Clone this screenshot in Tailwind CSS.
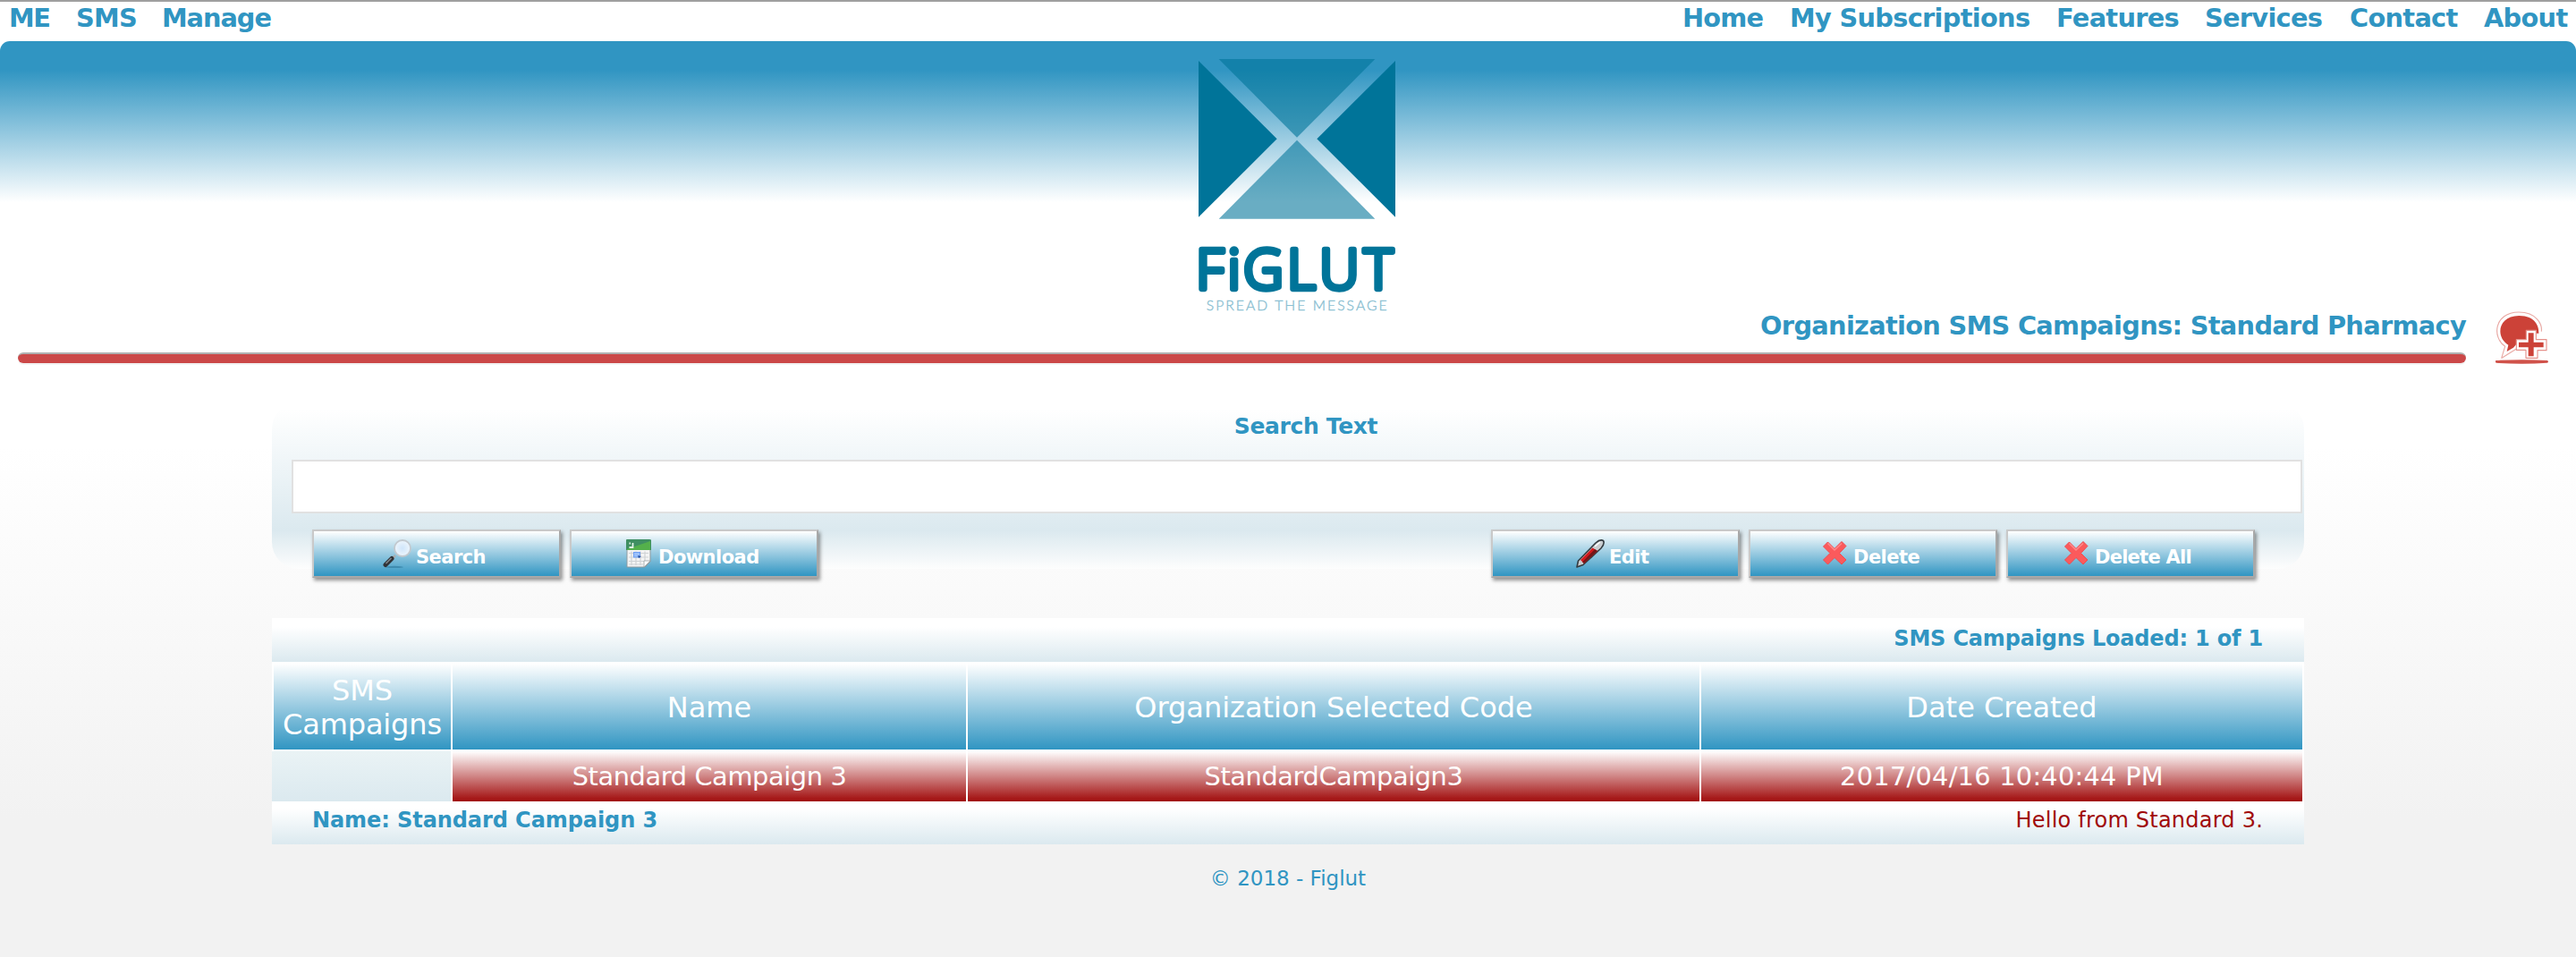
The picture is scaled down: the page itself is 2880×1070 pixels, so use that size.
<!DOCTYPE html>
<html lang="en">
<head>
<meta charset="utf-8">
<title>Figlut</title>
<script src="https://cdn.jsdelivr.net/npm/@tailwindcss/browser@4"></script>
</head>
<body class="w-[2880px] h-[1070px] overflow-hidden border-t-2 border-[#9f9f9f] bg-[linear-gradient(to_bottom,#ffffff_500px,#f2f2f2_915px)] font-['DejaVu_Sans',Verdana,sans-serif] text-[#3095c2]">

<nav class="flex h-[44px] justify-between text-[28.8px] leading-[36px] font-bold whitespace-nowrap">
  <div class="flex pl-[10px]">
    <a class="w-[75px] tracking-[-1.5px]">ME</a>
    <a class="w-[96px] tracking-[-0.7px]">SMS</a>
    <a class="tracking-[-1.05px]">Manage</a>
  </div>
  <div class="flex">
    <a class="w-[120px] tracking-[-0.8px]">Home</a>
    <a class="w-[298px] tracking-[-0.68px]">My Subscriptions</a>
    <a class="w-[166px] tracking-[-0.7px]">Features</a>
    <a class="w-[162px] tracking-[-0.7px]">Services</a>
    <a class="w-[150px] tracking-[-0.7px]">Contact</a>
    <a class="w-[103px] tracking-[-0.7px]">About</a>
  </div>
</nav>

<header class="flex h-[298px] items-start justify-center rounded-t-[11px] bg-[linear-gradient(to_bottom,#3095c2_32px,#ffffff_180px)] pt-[20px] pl-[20px]">
  <svg class="h-[284px] w-[220px] shrink-0 overflow-visible" viewBox="120 78 660 852">
    <path d="M120 84L383 346L120 608Z" fill="#007499"/>
    <path d="M780 84L517 346L780 608Z" fill="#007499"/>
    <path d="M188 78H712L450 341Z" fill="#007499" fill-opacity=".6"/>
    <path d="M450 350L712 614H188Z" fill="#007499" fill-opacity=".59"/>
    <text x="112 218 271 418 526 675" y="848" font-family="Open Sans, sans-serif" font-size="184" font-weight="300" fill="#007499" stroke="#007499" stroke-width="19" stroke-linejoin="round" stroke-linecap="round">FiGLUT</text>
    <text x="146" y="922" font-family="Lato, sans-serif" font-weight="300" font-size="47" fill="#8bbfd2" stroke="#8bbfd2" stroke-width="1.2" textLength="606">SPREAD THE MESSAGE</text>
  </svg>
</header>

<section class="flex pl-[20px]">
  <div class="w-[2737px]">
    <h1 class="text-right text-[28.8px] leading-[40px] font-bold tracking-[-0.68px]">Organization SMS Campaigns: Standard Pharmacy</h1>
    <div class="mt-[10px] h-[12px] rounded-[6px] border-t-2 border-[#b0b0b0] bg-[#cb4848] shadow-[0_2px_0_#f3f3f3]"></div>
  </div>
  <svg class="mt-[4px] ml-[33px] h-[60px] w-[60px]" viewBox="60 54 180 180">
    <path d="M80 212L92 172C48 142 54 58 138 57C200 57 217 100 214 122" fill="none" stroke="#e9aaa5" stroke-width="3.500"/>
    <path d="M81 211L134 178" stroke="#e9aaa5" stroke-width="3.500"/>
    <path d="M98 189L103 167C60 142 66 70 139 69C198 69 206 110 205 128H165V155H138L120 176Z" fill="#cc4238"/>
    <path d="M163 118H196V149H231V185H201V211H162V184H130V149H163Z" fill="#fff" stroke="#e5928c" stroke-width="3.500" stroke-linejoin="round"/>
    <path d="M170 127H188V158H221V175H188V205H170V175H138V158H170Z" fill="#cc4238"/>
    <path d="M62 219Q148 214 234 219Q240 223 234 227Q148 233 62 227Q56 223 62 219Z" fill="#d0524a"/>
  </svg>
</section>

<main class="mx-auto mt-[42px] w-[2272px] whitespace-nowrap">
  <section class="h-[186px] rounded-[30px] bg-[linear-gradient(to_bottom,#ffffff_4%,#dbe9ef_77%,#fdfdfd_100%)]">
    <label class="block pt-[11px] pl-[40px] text-center text-[25px] leading-[32px] font-bold tracking-[-0.35px]">Search Text</label>
    <input class="mt-[21px] ml-[22px] block h-[60px] w-[2248px] border-2 border-[#e1e1e1] bg-white">
    <div class="mt-[18px] flex justify-between pr-[55px] pl-[45px] text-[21px] leading-[26px] font-bold tracking-[-0.55px] text-white">
      <div class="flex gap-[10px]">
        <button class="flex h-[54px] w-[278px] items-center gap-[5px] border-2 border-t-[#c9c9c9] border-r-[#a8a8a8] border-b-[#a8a8a8] border-l-[#c9c9c9] bg-[linear-gradient(to_bottom,#ffffff,#3095c2)] pl-[77px] shadow-[2px_3px_4px_rgba(0,0,0,0.42)]">
          <svg class="h-8 w-8" viewBox="0 0 32 32">
            <defs><radialGradient id="lens"><stop offset="0" stop-color="#cfe5fa"/><stop offset="1" stop-color="#edf5fc"/></radialGradient></defs>
            <ellipse cx="13" cy="31" rx="10" ry="1.2" fill="#1e668a" opacity=".45"/>
            <path d="M14 18L10 22" stroke="#a9adb0" stroke-width="2.5"/>
            <path d="M10 21.500L3 28.500" stroke="#303337" stroke-width="5" stroke-linecap="round"/>
            <path d="M9.500 21L3.500 27" stroke="#85898d" stroke-width="1.500"/>
            <circle cx="22" cy="10" r="9" fill="url(#lens)" stroke="#c2c9cf" stroke-width="1.800"/>
          </svg>
          <span class="mt-[7px]">Search</span>
        </button>
        <button class="flex h-[54px] w-[278px] items-center gap-[5px] border-2 border-t-[#c9c9c9] border-r-[#a8a8a8] border-b-[#a8a8a8] border-l-[#c9c9c9] bg-[linear-gradient(to_bottom,#ffffff,#3095c2)] pl-[59px] shadow-[2px_3px_4px_rgba(0,0,0,0.42)]">
          <svg class="h-8 w-8" viewBox="0 0 32 32">
            <path d="M3 10H29V25L23 31H3Z" fill="#f4f4f4" stroke="#8e9a9e"/>
            <path d="M2 1Q2 0 3 0H28Q30 0 30 1V12H2Z" fill="#3f8f62"/>
            <path d="M3 11L29 2V12H3Z" fill="#54b04b"/>
            <path d="M9.500 4V9H5.500M5.500 4.500H7" fill="none" stroke="#e2f3e5" stroke-width="1.800"/>
            <path d="M5 15.500H27M5 20H27M5 24.500H25M5 28H21M8 13.500V29M13 13.500V29M18 13.500V29M23 13.500V25" stroke="#d0d3d5" stroke-width="1.200"/>
            <rect x="10.500" y="14.500" width="7" height="5.500" fill="#9cc1fb" stroke="#6f9ff2"/>
            <path d="M15 18L19 19L16 21Z" fill="#264f9e"/>
            <path d="M22 31V24H29Z" fill="#fff" stroke="#9ba2a5" stroke-width=".8"/>
          </svg>
          <span class="mt-[7px] ml-[1px]">Download</span>
        </button>
      </div>
      <div class="flex gap-[10px]">
        <button class="flex h-[54px] w-[278px] items-center gap-[5px] border-2 border-t-[#c9c9c9] border-r-[#a8a8a8] border-b-[#a8a8a8] border-l-[#c9c9c9] bg-[linear-gradient(to_bottom,#ffffff,#3095c2)] pl-[93px] shadow-[2px_3px_4px_rgba(0,0,0,0.42)]">
          <svg class="h-8 w-8" viewBox="0 0 32 32">
            <path d="M1 31L2.500 24L22 4Q27 -.5 30.500 1.500Q32.500 5 28 10L8 28.500Z" fill="#c9cdd0" stroke="#343b40" stroke-width="1.600" stroke-linejoin="round"/>
            <path d="M5 23L18.500 9.500L24 13L9 27Z" fill="#d3191d"/>
            <path d="M9 27L24 13L21 11L7 25.500Z" fill="#741518"/>
            <path d="M21 8L27 3" stroke="#fff" stroke-width="1.600"/>
          </svg>
          <span class="mt-[7px]">Edit</span>
        </button>
        <button class="flex h-[54px] w-[278px] items-center gap-[5px] border-2 border-t-[#c9c9c9] border-r-[#a8a8a8] border-b-[#a8a8a8] border-l-[#c9c9c9] bg-[linear-gradient(to_bottom,#ffffff,#3095c2)] pl-[78px] shadow-[2px_3px_4px_rgba(0,0,0,0.42)]">
          <svg class="h-8 w-8" viewBox="0 0 32 32">
            <path d="M8.500 3L16 10.500L24 2.500L29 7.500L21.500 15.500L29 23L24 28L16 20.500L8.500 28L3.500 23L11 15.500L3.500 8Z" fill="#fb5a5c" stroke="#ee4c50" stroke-linejoin="round"/>
            <path d="M8.500 4.500L16 12L24 4.500" fill="none" stroke="#ff8a8a" stroke-width="1.500"/>
          </svg>
          <span class="mt-[7px]">Delete</span>
        </button>
        <button class="flex h-[54px] w-[278px] items-center gap-[5px] border-2 border-t-[#c9c9c9] border-r-[#a8a8a8] border-b-[#a8a8a8] border-l-[#c9c9c9] bg-[linear-gradient(to_bottom,#ffffff,#3095c2)] pl-[60px] shadow-[2px_3px_4px_rgba(0,0,0,0.42)]">
          <svg class="h-8 w-8" viewBox="0 0 32 32">
            <path d="M8.500 3L16 10.500L24 2.500L29 7.500L21.500 15.500L29 23L24 28L16 20.500L8.500 28L3.500 23L11 15.500L3.500 8Z" fill="#fb5a5c" stroke="#ee4c50" stroke-linejoin="round"/>
            <path d="M8.500 4.500L16 12L24 4.500" fill="none" stroke="#ff8a8a" stroke-width="1.500"/>
          </svg>
          <span class="mt-[7px] tracking-[-0.75px]">Delete All</span>
        </button>
      </div>
    </div>
  </section>

  <div class="mt-[55px] h-[49px] bg-[linear-gradient(to_bottom,#ffffff_20%,#dbe9ef)] pt-[4px] pr-[46px] text-right text-[24px] leading-[38px] font-bold tracking-[-0.18px]">SMS Campaigns Loaded: 1 of 1</div>

  <div class="grid grid-cols-[198px_574px_818px_672px] gap-x-[2px] border-x-2 border-t-2 border-b-2 border-white bg-white text-center text-[32px] text-white">
    <div class="flex h-[96px] items-center justify-center bg-[linear-gradient(to_bottom,#ffffff,#3095c2)] pt-[1px] leading-[38px] tracking-[-0.15px]">SMS<br>Campaigns</div>
    <div class="flex items-center justify-center bg-[linear-gradient(to_bottom,#ffffff,#3095c2)] pt-[2px]">Name</div>
    <div class="flex items-center justify-center bg-[linear-gradient(to_bottom,#ffffff,#3095c2)] pt-[2px]">Organization Selected Code</div>
    <div class="flex items-center justify-center bg-[linear-gradient(to_bottom,#ffffff,#3095c2)] pt-[2px]">Date Created</div>
  </div>
  <div class="grid h-[54px] grid-cols-[200px_574px_818px_672px] gap-x-[2px] border-r-2 border-white bg-white text-center text-[28.8px] leading-[56px] text-white">
    <div class="bg-[linear-gradient(to_bottom,#eaf3f5,#dbe9ef)]"></div>
    <div class="bg-[linear-gradient(to_bottom,#ffffff,#a00a0a)] tracking-[-0.38px]">Standard Campaign 3</div>
    <div class="bg-[linear-gradient(to_bottom,#ffffff,#a00a0a)] tracking-[-0.4px]">StandardCampaign3</div>
    <div class="bg-[linear-gradient(to_bottom,#ffffff,#a00a0a)] tracking-[0.27px]">2017/04/16 10:40:44 PM</div>
  </div>
  <div class="flex h-[50px] justify-between bg-[linear-gradient(to_bottom,#ffffff_20%,#dbe9ef)] pt-[3px] pr-[46px] pl-[45px] text-[24px] leading-[40px]">
    <span class="font-bold tracking-[-0.08px]">Name: Standard Campaign 3</span>
    <span class="tracking-[0.22px] text-[#a00a0a]">Hello from Standard 3.</span>
  </div>
</main>

<footer class="mt-[22px] text-center text-[23px] leading-[32px]">© 2018 - Figlut</footer>
</body>
</html>
